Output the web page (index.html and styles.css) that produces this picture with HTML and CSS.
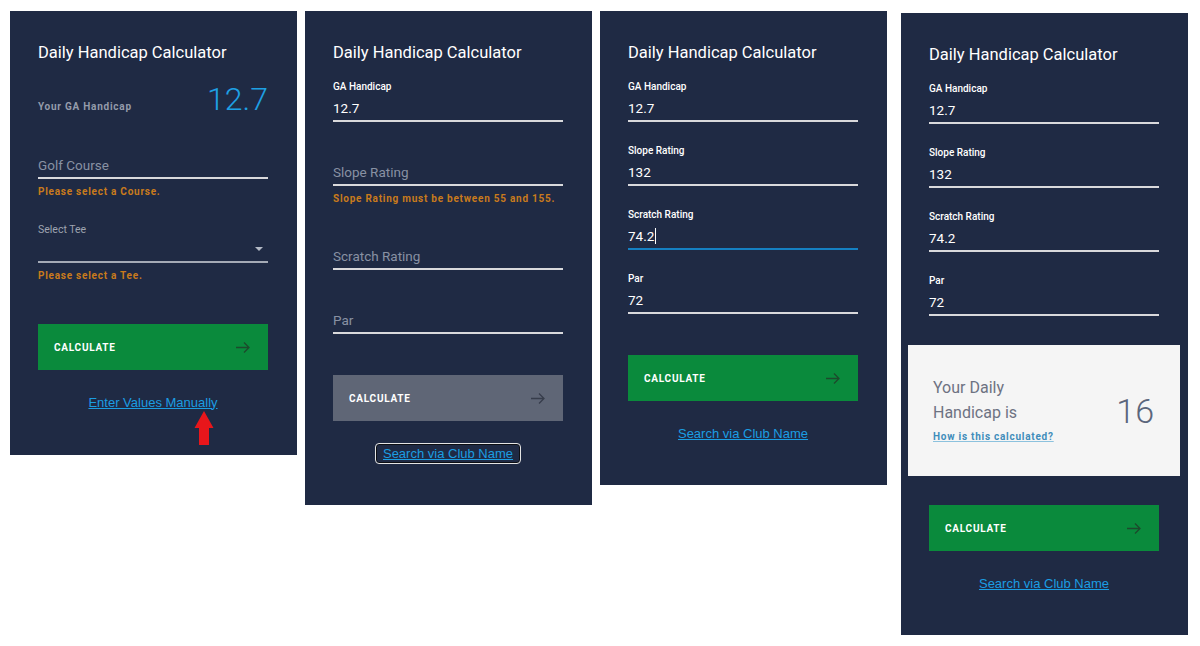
FILE: index.html
```html
<!DOCTYPE html>
<html lang="en">
<head>
<meta charset="utf-8">
<title>Daily Handicap Calculator</title>
<link rel="stylesheet" href="styles.css">
</head>
<body>
<div class="board">

  <section class="card card-1">
    <h2 class="title">Daily Handicap Calculator</h2>
    <div class="ga-row">
      <span class="ga-label">Your GA Handicap</span>
      <span class="ga-value">12.7</span>
    </div>
    <div class="field empty">
      <div class="label">Golf Course</div>
      <div class="input placeholder">Golf Course</div>
    </div>
    <div class="error">Please select a Course.</div>
    <div class="field select">
      <div class="label muted">Select Tee</div>
      <div class="input"><span class="caret"></span></div>
    </div>
    <div class="error">Please select a Tee.</div>
    <div class="btn"><span>CALCULATE</span><svg class="btn-arrow" width="14" height="11" viewBox="0 0 14 11"><path d="M0 5.5H13M8 0.5L13 5.5L8 10.5" fill="none" stroke="currentColor" stroke-width="1.3"/></svg></div>
    <div class="link-row"><a class="link" href="#">Enter Values Manually</a></div>
    <svg class="red-arrow" width="20" height="35" viewBox="0 0 20 35"><path d="M10 0L19.5 17H15V34H5V17H0.5Z" fill="#e8161b"/></svg>
  </section>

  <section class="card card-2">
    <h2 class="title">Daily Handicap Calculator</h2>
    <div class="field">
      <div class="label">GA Handicap</div>
      <div class="input">12.7</div>
    </div>
    <div class="field empty">
      <div class="label">Slope Rating</div>
      <div class="input placeholder">Slope Rating</div>
    </div>
    <div class="error">Slope Rating must be between 55 and 155.</div>
    <div class="field empty">
      <div class="label">Scratch Rating</div>
      <div class="input placeholder">Scratch Rating</div>
    </div>
    <div class="field empty">
      <div class="label">Par</div>
      <div class="input placeholder">Par</div>
    </div>
    <div class="btn disabled"><span>CALCULATE</span><svg class="btn-arrow" width="14" height="11" viewBox="0 0 14 11"><path d="M0 5.5H13M8 0.5L13 5.5L8 10.5" fill="none" stroke="currentColor" stroke-width="1.3"/></svg></div>
    <div class="link-row"><a class="link focused" href="#">Search via Club Name</a></div>
  </section>

  <section class="card card-3">
    <h2 class="title">Daily Handicap Calculator</h2>
    <div class="field">
      <div class="label">GA Handicap</div>
      <div class="input">12.7</div>
    </div>
    <div class="field">
      <div class="label">Slope Rating</div>
      <div class="input">132</div>
    </div>
    <div class="field active">
      <div class="label">Scratch Rating</div>
      <div class="input">74.2<span class="cursor"></span></div>
    </div>
    <div class="field">
      <div class="label">Par</div>
      <div class="input">72</div>
    </div>
    <div class="btn"><span>CALCULATE</span><svg class="btn-arrow" width="14" height="11" viewBox="0 0 14 11"><path d="M0 5.5H13M8 0.5L13 5.5L8 10.5" fill="none" stroke="currentColor" stroke-width="1.3"/></svg></div>
    <div class="link-row"><a class="link" href="#">Search via Club Name</a></div>
  </section>

  <section class="card card-4">
    <h2 class="title">Daily Handicap Calculator</h2>
    <div class="field">
      <div class="label">GA Handicap</div>
      <div class="input">12.7</div>
    </div>
    <div class="field">
      <div class="label">Slope Rating</div>
      <div class="input">132</div>
    </div>
    <div class="field">
      <div class="label">Scratch Rating</div>
      <div class="input">74.2</div>
    </div>
    <div class="field">
      <div class="label">Par</div>
      <div class="input">72</div>
    </div>
    <div class="result">
      <div class="result-text">
        <div class="result-title">Your Daily<br>Handicap is</div>
        <a class="how" href="#">How is this calculated?</a>
      </div>
      <div class="result-value">16</div>
    </div>
    <div class="btn"><span>CALCULATE</span><svg class="btn-arrow" width="14" height="11" viewBox="0 0 14 11"><path d="M0 5.5H13M8 0.5L13 5.5L8 10.5" fill="none" stroke="currentColor" stroke-width="1.3"/></svg></div>
    <div class="link-row"><a class="link" href="#">Search via Club Name</a></div>
  </section>

</div>
</body>
</html>
```

FILE: styles.css
```css
* { box-sizing: border-box; }

html, body {
  margin: 0;
  padding: 0;
  background: #ffffff;
}

body {
  font-family: Roboto, "Liberation Sans", Arial, sans-serif;
  width: 1200px;
  height: 646px;
  overflow: hidden;
}

.board {
  display: flex;
  align-items: flex-start;
  gap: 8px;
  padding: 11px 0 0 10px;
}

.card {
  position: relative;
  width: 287px;
  background: #1f2a44;
  padding: 30px 29px 43px 28px;
  display: flex;
  flex-direction: column;
}

.card-1 { padding-bottom: 44px; }

.card-4 {
  margin-left: 6px;
  margin-top: 2px;
}

.title {
  margin: 0;
  font-size: 16.5px;
  line-height: 24px;
  font-weight: 400;
  color: #ffffff;
}

/* GA handicap display */
.ga-row {
  margin-top: 16px;
  height: 36px;
  display: flex;
  align-items: baseline;
  justify-content: space-between;
}

.ga-label {
  font-size: 10px;
  font-weight: 700;
  letter-spacing: 0.75px;
  color: #959cab;
}

.ga-value {
  font-size: 32px;
  line-height: 36px;
  font-weight: 300;
  color: #1ea0e4;
}

/* fields */
.field {
  margin-top: 22px;
  display: flex;
  flex-direction: column;
}

.title + .field { margin-top: 15px; }
.ga-row + .field { margin-top: 20px; }

.label {
  font-size: 10px;
  line-height: 14px;
  font-weight: 500;
  color: #ffffff;
}

.label.muted {
  font-size: 10.5px;
  font-weight: 400;
  color: #9ea4b0;
  margin-top: 2px;
  margin-bottom: -2px;
}

.field.empty .label { visibility: hidden; }

.input {
  margin-top: 4px;
  height: 24px;
  padding-bottom: 2px;
  font-size: 13.5px;
  line-height: 20px;
  color: #ffffff;
  border-bottom: 2px solid #d9d9dc;
  display: flex;
  align-items: flex-start;
}

.input.placeholder { color: #8891a3; }

.field.select .input {
  border-bottom-color: #a4aab6;
  justify-content: flex-end;
  align-items: center;
  padding-right: 5px;
}

.caret {
  width: 0;
  height: 0;
  border-left: 4px solid transparent;
  border-right: 4px solid transparent;
  border-top: 4px solid #b4bac6;
}

.field.active .input { border-bottom-color: #1580c2; }

.cursor {
  display: inline-block;
  width: 1px;
  height: 16px;
  margin-top: 2px;
  margin-left: 1px;
  background: #ffffff;
}

.error {
  margin-top: 6px;
  font-size: 10px;
  line-height: 14px;
  font-weight: 700;
  letter-spacing: 0.75px;
  color: #c97b1c;
}

.error + .field { margin-top: 22px; }

/* button */
.btn {
  margin-top: 41px;
  height: 46px;
  background: #0a8a3c;
  display: flex;
  align-items: center;
  justify-content: space-between;
  padding: 0 18px 0 16px;
  color: #ffffff;
  font-size: 10px;
  font-weight: 700;
  letter-spacing: 0.75px;
}

.btn .btn-arrow { color: #1d4a2c; }

.btn.disabled { background: #5f6676; }
.btn.disabled .btn-arrow { color: #373d4b; }

.link-row {
  margin-top: 23px;
  height: 18px;
  display: flex;
  justify-content: center;
  align-items: center;
}

.link {
  font-family: "Liberation Sans", Arial, sans-serif;
  font-size: 13px;
  line-height: 17px;
  color: #1b9de2;
  text-decoration: underline;
}

.link.focused {
  padding: 0 6px;
  border: 1px solid #0d0f14;
  outline: 1px solid #e4e4e4;
  border-radius: 3px;
}

.red-arrow {
  position: absolute;
  left: 184px;
  top: 400px;
}

/* result box */
.result {
  margin: 29px -21px 0 -21px;
  height: 131px;
  background: #f5f5f5;
  display: flex;
  align-items: center;
  justify-content: space-between;
  padding: 0 26px 0 25px;
}

.result-text {
  display: flex;
  flex-direction: column;
  padding-bottom: 2px;
}

.result-title {
  font-size: 16px;
  line-height: 25px;
  color: #6d7282;
}

.how {
  margin-top: 5px;
  font-size: 10px;
  line-height: 14px;
  font-weight: 700;
  letter-spacing: 0.75px;
  color: #3f8dbb;
  text-decoration: underline;
  text-decoration-color: #8cc2de;
}

.result-value {
  font-size: 34px;
  font-weight: 300;
  line-height: 40px;
  color: #5b667c;
}

.card-4 .btn { margin-top: 29px; }
```
